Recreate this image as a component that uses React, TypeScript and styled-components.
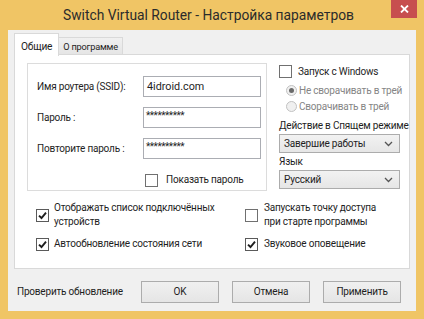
import styled, { createGlobalStyle } from 'styled-components';

const GlobalStyle = createGlobalStyle`
  html, body {
    margin: 0;
    padding: 0;
    background: #f0c565;
  }
  body {
    font-family: 'Segoe UI', Roboto, 'Noto Sans', sans-serif;
    font-size: 10px;
    letter-spacing: -0.2px;
    color: #1e1e1e;
    white-space: nowrap;
  }
`;

const Window = styled.div`
  width: 424px;
  height: 319px;
  box-sizing: border-box;
  display: flex;
  flex-direction: column;
  padding: 0 8px 8px;
  background: #f0c565;
`;

const TitleBar = styled.div`
  height: 30px;
  margin: 0 -8px;
  padding-right: 7px;
  display: grid;
  grid-template-columns: 1fr auto 1fr;
  align-items: start;
`;

const Title = styled.div`
  grid-column: 2;
  font-size: 13.8px;
  letter-spacing: 0;
  line-height: 30px;
  color: #2b2b2b;
`;

const CloseButton = styled.div`
  grid-column: 3;
  justify-self: end;
  width: 26px;
  height: 18px;
  display: flex;
  align-items: center;
  justify-content: center;
  background: #c74f4f;
`;

const Client = styled.div`
  flex: 1;
  display: flex;
  flex-direction: column;
  padding: 3px 6px 0;
  background: #f0f0f0;
`;

const TabRow = styled.div`
  display: flex;
  height: 22px;
  margin-bottom: -1px;
`;

const Tab = styled.div<{ $active?: boolean }>`
  position: relative;
  z-index: ${(p) => (p.$active ? 1 : 0)};
  box-sizing: border-box;
  height: ${(p) => (p.$active ? '23px' : '18px')};
  margin-top: ${(p) => (p.$active ? '0' : '4px')};
  padding: ${(p) => (p.$active ? '2px 6px 0' : '0 4px')};
  display: flex;
  align-items: center;
  border: 1px solid #d9d9d9;
  border-bottom: ${(p) => (p.$active ? 'none' : '1px solid #d9d9d9')};
  border-left: ${(p) => (p.$active ? '1px solid #d9d9d9' : 'none')};
  background: ${(p) => (p.$active ? '#ffffff' : 'linear-gradient(#f0f0f0, #e5e5e5)')};
  font-size: ${(p) => (p.$active ? '10.2px' : '9.2px')};
`;

const Panel = styled.div`
  box-sizing: border-box;
  height: 215px;
  padding: 8px 0 0 12px;
  display: grid;
  grid-template-columns: 240px 1fr;
  grid-template-rows: auto 1fr;
  column-gap: 12px;
  align-items: start;
  background: #ffffff;
  border: 1px solid #d9d9d9;
`;

const GroupBox = styled.div`
  box-sizing: border-box;
  width: 240px;
  height: 128px;
  padding: 12px 0 0 9px;
  display: grid;
  grid-template-columns: 106px 118px;
  grid-auto-rows: 21px;
  row-gap: 10px;
  align-items: center;
  border: 1px solid #dcdcdc;
`;

const FieldLabel = styled.label``;

const TextInput = styled.div<{ $secret?: boolean }>`
  box-sizing: border-box;
  height: 21px;
  padding: ${(p) => (p.$secret ? '0 2px 4px' : '0 3px')};
  display: flex;
  align-items: center;
  border: 1px solid #abadb3;
  background: #fff;
  font-size: ${(p) => (p.$secret ? '10px' : '10.8px')};
  letter-spacing: ${(p) => (p.$secret ? '-0.5px' : '0')};
`;

const InlineCheck = styled.div`
  grid-column: 2;
  padding-left: 2px;
  height: 13px;
`;

const SideColumn = styled.div`
  display: flex;
  flex-direction: column;
`;

const OptionRow = styled.div<{ $indent?: number; $disabled?: boolean; $top?: number }>`
  height: 16px;
  margin-top: ${(p) => p.$top ?? 0}px;
  padding-left: ${(p) => p.$indent ?? 0}px;
  display: flex;
  align-items: center;
  gap: 6px;
  color: ${(p) => (p.$disabled ? '#858585' : '#1e1e1e')};
`;

const CaptionLabel = styled.div<{ $top: number }>`
  height: 16px;
  line-height: 16px;
  margin-top: ${(p) => p.$top}px;
`;

const Select = styled.div`
  box-sizing: border-box;
  width: 121px;
  height: 19px;
  padding: 0 6px 0 4px;
  display: flex;
  align-items: center;
  justify-content: space-between;
  border: 1px solid #acacac;
  background: linear-gradient(#f2f2f2, #e6e6e6);
`;

const Box = styled.span<{ $checked?: boolean }>`
  box-sizing: border-box;
  flex: none;
  width: 13px;
  height: 13px;
  display: inline-flex;
  align-items: center;
  justify-content: center;
  border: 1px solid ${(p) => (p.$checked ? '#5a5a5a' : '#707070')};
  background: #fff;
`;

const Radio = styled.span<{ $checked?: boolean }>`
  box-sizing: border-box;
  flex: none;
  width: 11px;
  height: 11px;
  margin-right: -4px;
  display: inline-flex;
  align-items: center;
  justify-content: center;
  border-radius: 50%;
  border: 1px solid #c2c2c2;
  background: #f0f0f0;

  &::after {
    content: '';
    display: ${(p) => (p.$checked ? 'block' : 'none')};
    width: 5px;
    height: 5px;
    border-radius: 50%;
    background: #6a6a6a;
  }
`;

const OptionsGrid = styled.div`
  grid-column: 1 / -1;
  margin: 10px 0 0 9px;
  display: grid;
  grid-template-columns: 209px 1fr;
  row-gap: 8px;
  align-items: center;
`;

const CheckOption = styled.div<{ $gap?: number }>`
  display: flex;
  align-items: center;
  gap: ${(p) => p.$gap ?? 5}px;
  line-height: 14px;
`;

const Footer = styled.div`
  flex: 1;
  display: flex;
  align-items: center;
  padding: 3px 9px 0 3px;
`;

const ButtonGroup = styled.div`
  margin-left: auto;
  display: flex;
  gap: 13px;
`;

const Button = styled.div`
  box-sizing: border-box;
  width: 78px;
  height: 22px;
  display: flex;
  align-items: center;
  justify-content: center;
  border: 1px solid #acacac;
  background: linear-gradient(#f0f0f0, #e5e5e5);
`;

function CheckBox({ checked }: { checked?: boolean }) {
  return (
    <Box $checked={checked}>
      {checked && (
        <svg width="9" height="9" viewBox="0 0 9 9">
          <path d="M1 4.6 L3.5 7 L8 1.6" fill="none" stroke="#1e1e1e" strokeWidth="1.9" />
        </svg>
      )}
    </Box>
  );
}

function Chevron() {
  return (
    <svg width="9" height="6" viewBox="0 0 9 6">
      <path d="M1 1 L4.5 4.5 L8 1" fill="none" stroke="#555" strokeWidth="1.3" />
    </svg>
  );
}

export default function App() {
  return (
    <>
      <GlobalStyle />
      <Window>
        <TitleBar>
          <Title>Switch Virtual Router - Настройка параметров</Title>
          <CloseButton>
            <svg width="9" height="8" viewBox="0 0 9 8">
              <path d="M1 0.5 L8 7.5 M8 0.5 L1 7.5" stroke="#fff" strokeWidth="1.8" />
            </svg>
          </CloseButton>
        </TitleBar>
        <Client>
          <TabRow>
            <Tab $active>Общие</Tab>
            <Tab>О программе</Tab>
          </TabRow>
          <Panel>
            <GroupBox>
              <FieldLabel>Имя роутера (SSID):</FieldLabel>
              <TextInput>4idroid.com</TextInput>
              <FieldLabel>Пароль :</FieldLabel>
              <TextInput $secret>**********</TextInput>
              <FieldLabel>Повторите пароль :</FieldLabel>
              <TextInput $secret>**********</TextInput>
              <InlineCheck>
                <CheckOption $gap={8}>
                  <CheckBox />
                  <span>Показать пароль</span>
                </CheckOption>
              </InlineCheck>
            </GroupBox>
            <SideColumn>
              <OptionRow>
                <CheckBox />
                Запуск с Windows
              </OptionRow>
              <OptionRow $indent={7} $disabled $top={3}>
                <Radio $checked />
                Не сворачивать в трей
              </OptionRow>
              <OptionRow $indent={7} $disabled>
                <Radio />
                Сворачивать в трей
              </OptionRow>
              <CaptionLabel $top={4}>Действие в Спящем режиме</CaptionLabel>
              <Select>
                Завершие работы
                <Chevron />
              </Select>
              <CaptionLabel $top={1}>Язык</CaptionLabel>
              <Select>
                Русский
                <Chevron />
              </Select>
            </SideColumn>
            <OptionsGrid>
              <CheckOption>
                <CheckBox checked />
                <span>
                  Отображать список подключённых
                  <br />
                  устройств
                </span>
              </CheckOption>
              <CheckOption $gap={6}>
                <CheckBox />
                <span>
                  Запускать точку доступа
                  <br />
                  при старте программы
                </span>
              </CheckOption>
              <CheckOption>
                <CheckBox checked />
                <span>Автообновление состояния сети</span>
              </CheckOption>
              <CheckOption $gap={6}>
                <CheckBox checked />
                <span>Звуковое оповещение</span>
              </CheckOption>
            </OptionsGrid>
          </Panel>
          <Footer>
            <span>Проверить обновление</span>
            <ButtonGroup>
              <Button>OK</Button>
              <Button>Отмена</Button>
              <Button>Применить</Button>
            </ButtonGroup>
          </Footer>
        </Client>
      </Window>
    </>
  );
}
